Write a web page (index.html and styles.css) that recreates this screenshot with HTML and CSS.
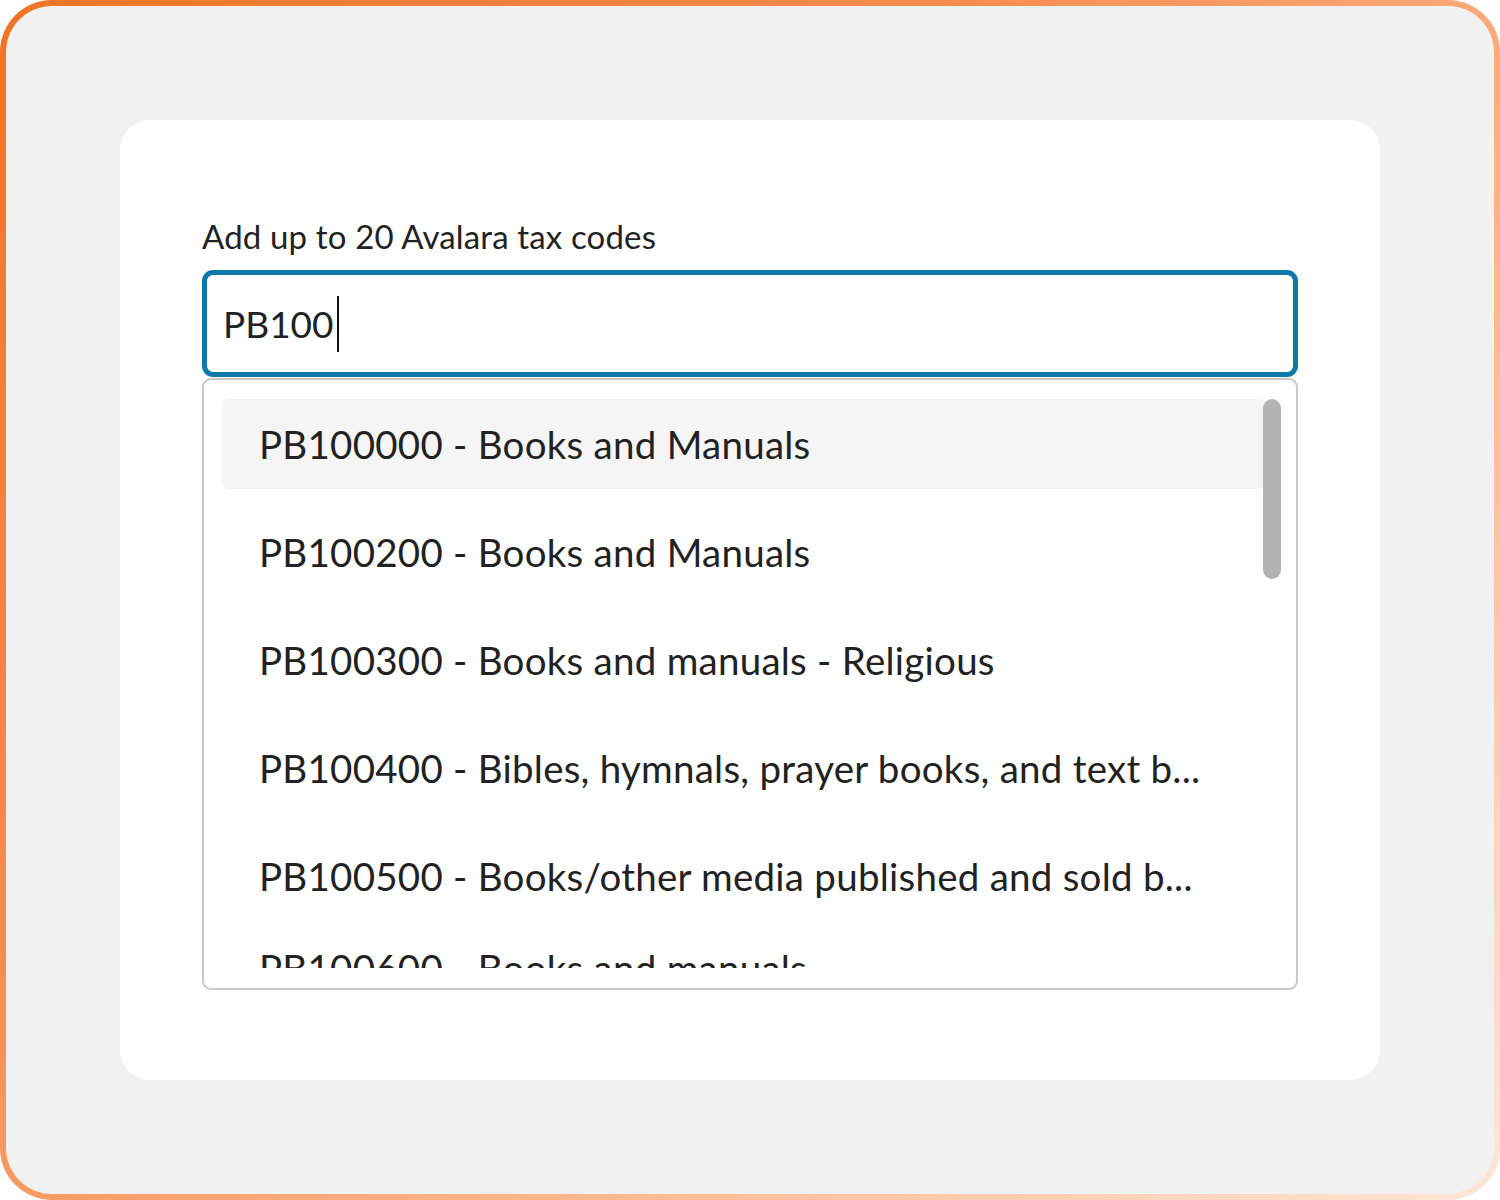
FILE: index.html
```html
<!DOCTYPE html>
<html>
<head>
<meta charset="utf-8">
<link rel="stylesheet" href="styles.css">
</head>
<body>
<div class="frame">
  <div class="canvas">
    <div class="card">
      <label class="label">Add up to 20 Avalara tax codes</label>
      <div class="input"><span class="value">PB100</span><span class="caret"></span></div>
      <div class="dropdown">
        <div class="viewport">
          <ul class="list">
            <li class="item active">PB100000 - Books and Manuals</li>
            <li class="item">PB100200 - Books and Manuals</li>
            <li class="item">PB100300 - Books and manuals - Religious</li>
            <li class="item">PB100400 - Bibles, hymnals, prayer books, and text b...</li>
            <li class="item">PB100500 - Books/other media published and sold b...</li>
            <li class="item last">PB100600 - Books and manuals</li>
          </ul>
        </div>
        <div class="scrollbar"></div>
      </div>
    </div>
  </div>
</div>
</body>
</html>
```
FILE: styles.css
```css
* { box-sizing: border-box; }
html, body { margin: 0; padding: 0; background: #ffffff; }
body { font-family: "Source Sans Pro", Lato, "Noto Sans", sans-serif; color: #222222; }
.frame {
  width: 1500px;
  height: 1200px;
  padding: 6px;
  border-radius: 52px;
  background: linear-gradient(135deg, #ef7425 0%, #f68d4e 35%, #fbb68c 65%, #ffe6d8 100%);
}
.canvas {
  width: 100%;
  height: 100%;
  border-radius: 46px;
  background: #f1f1f1;
  padding: 114px;
}
.card {
  background: #ffffff;
  border-radius: 30px;
  height: 960px;
  padding: 96px 82px 0 82px;
  display: flex;
  flex-direction: column;
}
.label {
  font-size: 33px;
  letter-spacing: 0.15px;
  line-height: 40px;
  margin-bottom: 14px;
  color: #222;
}
.input {
  height: 107px;
  border: 5px solid #0f78ab;
  border-radius: 11px;
  padding: 0 0 0 16px;
  display: flex;
  align-items: center;
  font-size: 37px;
}
.caret {
  display: inline-block;
  width: 2px;
  height: 56px;
  background: #111;
  margin-left: 3px;
}
.dropdown {
  position: relative;
  margin-top: 1px;
  height: 612px;
  border: 2px solid #c8c8c8;
  border-radius: 9px;
  overflow: hidden;
  padding-bottom: 20px;
}
.viewport {
  height: 100%;
  overflow: hidden;
  padding: 19px 31px 0 18px;
}
.list {
  list-style: none;
  margin: 0;
  padding: 0;
  display: flex;
  flex-direction: column;
  gap: 18px;
}
.item {
  flex: none;
  height: 90px;
  display: flex;
  align-items: center;
  padding-left: 37px;
  font-size: 38.5px;
  letter-spacing: 0.25px;
  border-radius: 6px;
  white-space: nowrap;
}
.item.active { background: #f5f5f5; }
.item.last { margin-top: -16px; }
.scrollbar {
  position: absolute;
  top: 19px;
  right: 15px;
  width: 18px;
  height: 180px;
  border-radius: 9px;
  background: #b3b3b3;
}
```
